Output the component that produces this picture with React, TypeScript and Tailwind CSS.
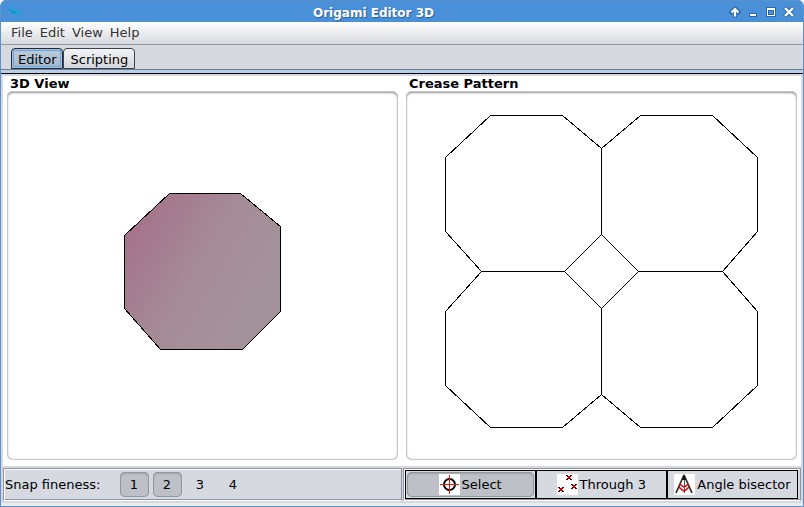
import { useState } from "react";
import type { ReactNode } from "react";

const menus = ["File", "Edit", "View", "Help"];

function TitleBar() {
  return (
    <header className="flex h-[22px] shrink-0 items-center border-t border-[#5b92cd] bg-[#4a90d9] pr-[6px] pl-1">
      <svg className="ml-[2px] h-4 w-4" viewBox="0 0 16 16" aria-hidden="true">
        <path d="M1 3L4 4L9 6L11 7L15 8L13 9L14 10L12 10L13 12L8 10L4 9L2 6Z" fill="#1fa3dc" />
        <path d="M2 5L9 8L10 10L5 9Z" fill="#1795b8" />
      </svg>
      <h1 className="flex-1 pt-[2px] pr-[3px] text-center text-[12px] leading-5 font-bold text-white [text-shadow:1px_1px_1px_#2c5f99]">
        Origami Editor 3D
      </h1>
      <div className="flex gap-[2px]">
        <button aria-label="Roll up" className="h-4 w-4">
          <svg viewBox="0 0 16 16" fill="none">
            <path d="M8 13.500V5M3 9.500L8 4.500L13 9.500" stroke="#2d67a5" strokeWidth="4" />
            <path d="M8 12.500V5M4.500 8.500L8 5L11.500 8.500" stroke="#fff" strokeWidth="2.200" />
          </svg>
        </button>
        <button aria-label="Minimize" className="h-4 w-4">
          <svg viewBox="0 0 16 16" shapeRendering="crispEdges">
            <rect x="4" y="9" width="8" height="4" fill="#2d67a5" />
            <rect x="5" y="10" width="6" height="2" fill="#fff" />
          </svg>
        </button>
        <button aria-label="Maximize" className="h-4 w-4">
          <svg viewBox="0 0 16 16" shapeRendering="crispEdges">
            <rect x="3" y="3" width="10" height="10" fill="#2d67a5" />
            <rect x="4" y="4" width="8" height="8" fill="#fff" />
            <rect x="5" y="6" width="6" height="5" fill="#2d67a5" />
            <rect x="6" y="7" width="4" height="3" fill="#4a90d9" />
          </svg>
        </button>
        <button aria-label="Close" className="h-4 w-4">
          <svg viewBox="0 0 16 16" fill="none">
            <path d="M3.500 3.500L12.500 12.500M12.500 3.500L3.500 12.500" stroke="#2d67a5" strokeWidth="4" />
            <path d="M4 4L12 12M12 4L4 12" stroke="#fff" strokeWidth="2.400" />
          </svg>
        </button>
      </div>
    </header>
  );
}

function View({ title, children }: { title: string; children: ReactNode }) {
  return (
    <section className="flex min-w-0 flex-1 flex-col">
      <h2 className="h-[15px] pl-[3px] text-[13px] leading-[15px] font-bold">{title}</h2>
      <div className="min-h-0 flex-1 rounded-md bg-white shadow-[inset_0_0_0_1px_#c8c8c8,inset_0_2px_2px_#9a9a9a,inset_0_0_3px_#bbbbbb]">
        {children}
      </div>
    </section>
  );
}

function ToolBar({ children }: { children: ReactNode }) {
  return (
    <div
      role="toolbar"
      className="flex h-[33px] min-w-0 flex-1 items-center border border-[#8f939b] border-b-white p-px shadow-[inset_1px_1px_0_#ffffff,inset_0_-1px_0_#8f939b]"
    >
      {children}
    </div>
  );
}

const pressedLook =
  "rounded-[5px] bg-[#bdc0c7] shadow-[inset_0_0_0_1px_#93969c,inset_0_2px_2px_#a3a6ad]";

function SelectIcon() {
  return (
    <svg className="h-[21px] w-[21px] bg-white" viewBox="0 0 21 21" fill="none" aria-hidden="true">
      <circle cx="10.500" cy="10.500" r="5.500" stroke="#000" strokeWidth="2" />
      <path d="M1 10.500H20M10.500 1V20" stroke="#ff1010" shapeRendering="crispEdges" />
    </svg>
  );
}

function Cross({ x, y }: { x: number; y: number }) {
  return (
    <g transform={`translate(${x} ${y})`}>
      <path d="M0 0h2v1h-2zM4 0h2v1h-2zM1 1h1v1h-1zM4 1h1v1h-1zM1 3h1v1h-1zM4 3h1v1h-1zM0 4h2v1h-2zM4 4h2v1h-2z" fill="#5a0000" />
      <path d="M2 1h2v3h-2z" fill="#c80000" />
    </g>
  );
}

function ThroughIcon() {
  return (
    <svg className="h-[21px] w-[21px] bg-white" viewBox="0 0 21 21" shapeRendering="crispEdges" aria-hidden="true">
      <Cross x={9} y={1} />
      <Cross x={14} y={10} />
      <Cross x={1} y={13} />
    </svg>
  );
}

function BisectorIcon() {
  return (
    <svg className="h-[21px] w-[21px] bg-white" viewBox="0 0 21 21" fill="none" aria-hidden="true">
      <path d="M10 1L2 19M10 1L18 19" stroke="#333" strokeWidth="1.800" />
      <path d="M10.500 1V19" stroke="#555" />
      <path d="M10 0L8 6H12Z" fill="#111" />
      <path d="M6 10L8 12L10 13L12 12L14 10M5 13L8 16L10 17L12 16L15 13" stroke="#e00000" strokeWidth="1.500" />
    </svg>
  );
}

const tools = [
  { name: "Select", icon: <SelectIcon /> },
  { name: "Through 3", icon: <ThroughIcon /> },
  { name: "Angle bisector", icon: <BisectorIcon /> },
];

export default function App() {
  const [tool, setTool] = useState("Select");
  const [snaps, setSnaps] = useState([1, 2]);
  const [tab, setTab] = useState("Editor");
  const toggle = (n: number) =>
    setSnaps(snaps.includes(n) ? snaps.filter((s) => s !== n) : [...snaps, n]);

  return (
    <div className="flex h-screen flex-col overflow-hidden rounded-t-md border-x border-b border-[#5b92cd] bg-[#d6d9e0] font-['DejaVu_Sans',sans-serif] text-[13px] text-black">
      <TitleBar />
      <nav className="flex h-[23px] shrink-0 items-center gap-[7px] border-b border-[#9297a1] bg-linear-to-b from-white to-[#d6d9de] pl-[10px] text-[#333333]">
        {menus.map((m) => (
          <button key={m} className="leading-5">
            {m}
          </button>
        ))}
      </nav>
      <div role="tablist" className="flex h-[25px] shrink-0 items-end border-b border-[#6f7b8f] pl-[10px]">
        {["Editor", "Scripting"].map((t) => (
          <button
            key={t}
            role="tab"
            aria-selected={tab === t}
            onClick={() => setTab(t)}
            className={
              tab === t
                ? "h-[21px] rounded-t-[4px] border border-[#1e2a3c] bg-linear-to-b from-[#bccbda] to-[#a3b9cf] px-[6px] pt-px leading-[19px] shadow-[inset_0_0_0_1px_#a9c4df,inset_0_0_0_2px_#6ba3d8]"
                : "h-[21px] rounded-t-[4px] border border-[#3c414b] bg-linear-to-b from-[#f3f4f6] to-[#d3d6dd] px-[6px] pt-px leading-[19px]"
            }
          >
            {t}
          </button>
        ))}
      </div>
      <div className="h-1 shrink-0 border-b border-black bg-[#b8cfe8]" />
      <main className="mx-[2px] mt-[2px] flex min-h-0 flex-1 gap-2 bg-white px-1 pb-[6px]">
        <View title="3D View">
          <svg className="h-full w-full" viewBox="7 91 391 369" shapeRendering="crispEdges" aria-label="Folded paper">
            <defs>
              <linearGradient id="paper" gradientUnits="userSpaceOnUse" x1="140" y1="220" x2="260" y2="290">
                <stop offset="0" stopColor="#a5748c" />
                <stop offset="0.550" stopColor="#a58c97" />
                <stop offset="1" stopColor="#a4929a" />
              </linearGradient>
            </defs>
            <path
              d="M169.500 193.500H240.500L280.500 226.500V311.500L242.500 349.500H160.500L124.500 308.500V235.500Z"
              fill="url(#paper)"
              stroke="#000"
            />
          </svg>
        </View>
        <View title="Crease Pattern">
          <svg className="h-full w-full" viewBox="406 91 391 369" shapeRendering="crispEdges" aria-label="Crease pattern">
            <g fill="none" stroke="#000">
              <path d="M601.500 148.500L562.500 115.500H490.500L445.500 157.500V231.500L481.500 271.500L445.500 311.500V385.500L490.500 427.500H562.500L601.500 394.500" />
              <path d="M601.500 148.500L640.500 115.500H712.500L757.500 157.500V231.500L722.500 271.500L757.500 311.500V385.500L712.500 427.500H640.500L601.500 394.500" />
              <path d="M601.500 148.500V234.500L638.500 271.500L601.500 308.500L564.500 271.500L601.500 234.500M601.500 308.500V394.500M481.500 271.500H564.500M638.500 271.500H722.500" />
            </g>
          </svg>
        </View>
      </main>
      <footer className="mx-[2px] mt-[2px] flex shrink-0 gap-px">
        <ToolBar>
          <span id="snap" className="w-[115px]">
            Snap fineness:
          </span>
          <div role="group" aria-labelledby="snap" className="flex gap-1">
            {[1, 2, 3, 4].map((n) => (
              <button
                key={n}
                aria-pressed={snaps.includes(n)}
                onClick={() => toggle(n)}
                className={"h-[25px] w-[29px] pr-px " + (snaps.includes(n) ? pressedLook : "")}
              >
                {n}
              </button>
            ))}
          </div>
        </ToolBar>
        <ToolBar>
          <div className="mr-px flex h-[29px] flex-1 divide-x-2 divide-black border border-black">
            {tools.map(({ name, icon }) => (
              <button
                key={name}
                aria-pressed={tool === name}
                onClick={() => setTool(name)}
                className="flex flex-1 basis-0 p-px whitespace-nowrap"
              >
                <span
                  className={
                    "flex h-full w-full items-center justify-center gap-[2px] " +
                    (tool === name ? pressedLook : "")
                  }
                >
                  {icon}
                  {name}
                </span>
              </button>
            ))}
          </div>
        </ToolBar>
      </footer>
      <div className="mt-[2px] h-[3px] shrink-0 bg-[#ececee]" />
    </div>
  );
}
